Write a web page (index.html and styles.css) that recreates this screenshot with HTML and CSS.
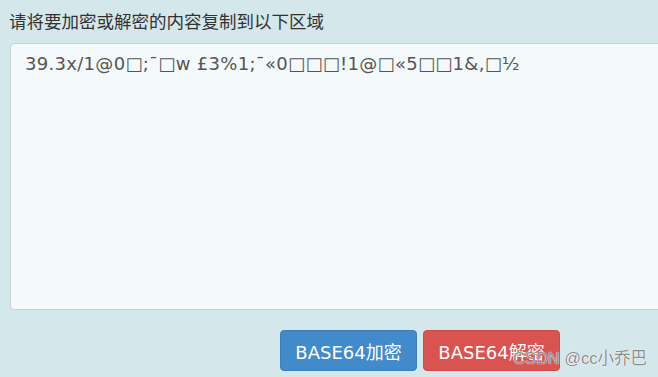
FILE: index.html
```html
<!DOCTYPE html>
<html>
<head>
    <meta charset="utf-8">
    <title>BASE64 加密解密</title>
    <link rel="stylesheet" href="styles.css">
</head>
<body>
    <div class="tool">
        <label class="tool-label" for="content">请将要加密或解密的内容复制到以下区域</label>
        <textarea id="content" class="tool-input">39.3x/1@0□;¯□w £3%1;¯«0□□□!1@□«5□□1&amp;,□½</textarea>
        <div class="tool-actions">
            <button class="btn btn-primary">BASE64加密</button>
            <button class="btn btn-danger">BASE64解密</button>
        </div>
    </div>
    <!-- watermark from the original capture -->
    <div class="watermark">CSDN @cc小乔巴</div>
</body>
</html>
```

FILE: styles.css
```css
html, body {
    overflow: hidden;
}
body {
    margin: 0;
    background: #d4e7eb;
    font-family: "DejaVu Sans", "Noto Sans CJK SC", sans-serif;
}
.tool {
    width: 820px;
    padding: 10px 0 0 10px;
}
.tool-label {
    display: block;
    color: #333;
    font-size: 17.5px;
    line-height: 24px;
    margin: 0 0 9px -1px;
}
.tool-input {
    display: block;
    box-sizing: border-box;
    width: 820px;
    height: 267px;
    margin: 0;
    padding: 8px 14px;
    background: #f4f9fc;
    border: 1px solid #c8cfd2;
    border-radius: 4px;
    color: #555;
    font-family: "DejaVu Sans", "Noto Sans CJK SC", sans-serif;
    font-size: 18px;
    line-height: 24px;
    letter-spacing: 0.3px;
    resize: none;
    outline: none;
}
.tool-actions {
    display: flex;
    justify-content: center;
    gap: 6px;
    margin-top: 20px;
}
.btn {
    width: 137px;
    height: 41px;
    border: 1px solid transparent;
    border-radius: 4px;
    color: #fff;
    font-family: "DejaVu Sans", "Noto Sans CJK SC", sans-serif;
    font-size: 18px;
    padding: 0;
    cursor: pointer;
}
.btn-primary {
    background: #428bca;
    border-color: #3b7fbb;
}
.btn-danger {
    background: #d9534f;
    border-color: #cf4a46;
}
.watermark {
    position: absolute;
    left: 513px;
    top: 345px;
    color: rgba(125, 125, 125, 0.9);
    font-family: "Liberation Sans", "Noto Sans CJK SC", sans-serif;
    font-size: 16.5px;
    text-shadow: 0 0 1px #fff, 0 0 1px #fff;
}
```
